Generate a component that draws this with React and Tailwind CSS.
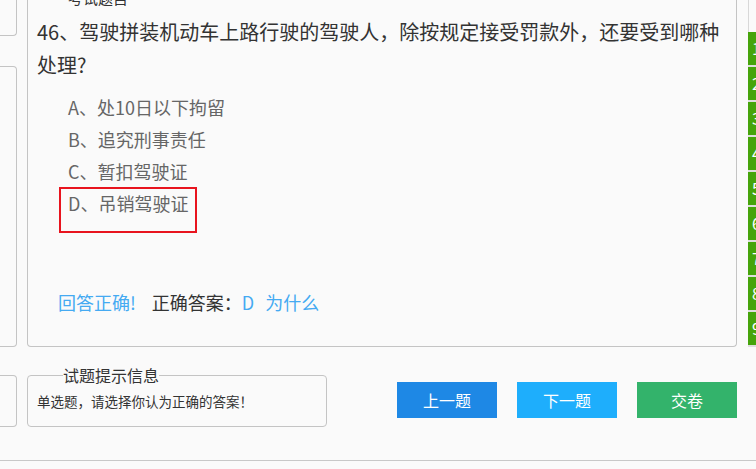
import React from "react";

const options = [
  { key: "A", text: "处10日以下拘留" },
  { key: "B", text: "追究刑事责任" },
  { key: "C", text: "暂扣驾驶证" },
  { key: "D", text: "吊销驾驶证", picked: true },
];

const numbers = [1, 2, 3, 4, 5, 6, 7, 8, 9];

export default function App() {
  return (
    <div className="w-[756px] h-[469px] overflow-hidden bg-[#fafafa] flex flex-col font-['Noto_Sans_CJK_SC',sans-serif]">
      {/* 上半部分 */}
      <div className="flex h-[347px] shrink-0">
        <div className="w-[17px] shrink-0 flex flex-col">
          <div className="h-[36px] border-r border-b border-[#c4c4c4] rounded-br-[4px]" />
          <div className="mt-[30px] h-[281px] border-r border-t border-b border-[#c4c4c4] rounded-r-[4px]" />
        </div>

        <div className="ml-[10px] w-[710px] shrink-0 border-l border-r border-b border-[#c4c4c4] rounded-b-[4px] flex flex-col">
          <div className="h-[6px] overflow-hidden">
            <div className="-mt-[10px] ml-[40px] text-[15px] leading-[16px] text-[#333]">考试题目</div>
          </div>
          <div className="mt-[9px] pl-[9px] pr-[10px] text-[20px] leading-[33px] text-[#333]">
            46、驾驶拼装机动车上路行驶的驾驶人，除按规定接受罚款外，还要受到哪种处理?
          </div>

          <div className="mt-[10px] ml-[31px] flex flex-col text-[18px] text-[#666]">
            {options.map((o) =>
              o.picked ? (
                <div
                  key={o.key}
                  className="w-[138px] h-[46px] border-2 border-[#e8141e] pl-[7px] leading-[28px] whitespace-nowrap"
                >
                  {o.key}、{o.text}
                </div>
              ) : (
                <div key={o.key} className="pl-[9px] leading-[32px] whitespace-nowrap">
                  {o.key}、{o.text}
                </div>
              )
            )}
          </div>

          <div className="mt-[53px] ml-[30px] flex items-center text-[18px] leading-[32px] whitespace-nowrap">
            <span className="text-[#45aaf2]">回答正确!</span>
            <span className="ml-[16px] text-[#333]">正确答案：</span>
            <span className="text-[#45aaf2]">D</span>
            <span className="ml-[11px] text-[#45aaf2]">为什么</span>
          </div>
        </div>

        <div className="ml-[11px] flex-1 flex flex-col">
          <div className="h-[32px] border-l border-[#d8d8d8]" />
          {numbers.map((n) => (
            <div
              key={n}
              className="h-[35px] box-border bg-[#46a40b] border-b-2 border-[#dedede] pl-[4px] text-white text-[16px] leading-[33px]"
            >
              {n}
            </div>
          ))}
        </div>
      </div>

      {/* 下半部分 */}
      <div className="flex h-[113px] shrink-0">
        <div className="w-[17px] shrink-0 mt-[28px] h-[52px] border-r border-t border-b border-[#c4c4c4] rounded-r-[4px]" />

        <div className="relative ml-[10px] mt-[28px] w-[300px] h-[52px] border border-[#c4c4c4] rounded-[4px] pl-[9px] pt-[15px]">
          <div className="absolute -top-[11px] left-[35px] bg-[#fafafa] text-[16px] leading-[20px] text-[#333]">
            试题提示信息
          </div>
          <div className="text-[13.5px] leading-[20px] text-[#333] whitespace-nowrap">
            单选题，请选择你认为正确的答案！
          </div>
        </div>

        <div className="ml-[70px] mt-[35px] flex gap-[20px]">
          <button className="w-[100px] h-[36px] bg-[#1e88e5] text-white text-[16px]">上一题</button>
          <button className="w-[100px] h-[36px] bg-[#1eaefc] text-white text-[16px]">下一题</button>
          <button className="w-[100px] h-[36px] bg-[#33b36b] text-white text-[16px]">交卷</button>
        </div>
      </div>

      <div className="border-t border-[#c8c8c8] flex-1" />
    </div>
  );
}
